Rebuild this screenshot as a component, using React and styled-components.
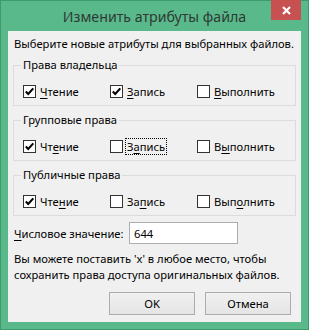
import React from "react";
import styled, { createGlobalStyle } from "styled-components";

const GlobalStyle = createGlobalStyle`
  html, body { margin: 0; padding: 0; }
  body {
    width: 309px;
    height: 330px;
    overflow: hidden;
    font-family: "Noto Sans", "Open Sans", sans-serif;
    font-size: 11.2px;
    color: #000;
  }
`;

const Window = styled.div`
  box-sizing: border-box;
  width: 309px;
  height: 330px;
  background: #5ab98b;
  border: 1px solid #3f9b6e;
  padding: 0 7px 7px;
  display: flex;
  flex-direction: column;
`;

const TitleBar = styled.div`
  height: 30px;
  display: grid;
  grid-template-columns: 1fr auto 1fr;
  align-items: start;
`;

const Title = styled.div`
  grid-column: 2;
  font-size: 14.2px;
  line-height: 31px;
  color: #2f3a34;
  white-space: nowrap;
`;

const CloseButton = styled.div`
  grid-column: 3;
  justify-self: end;
  width: 30px;
  height: 20px;
  margin-top: -1px;
  background: #c75050;
  display: flex;
  align-items: center;
  justify-content: center;
`;

const Panel = styled.div`
  flex: 1;
  background: #f0f0f0;
  padding: 5px 5px 7px;
  display: flex;
  flex-direction: column;
`;

const Intro = styled.div`
  padding-left: 1px;
  line-height: 15px;
  white-space: nowrap;
`;

const Group = styled.fieldset`
  margin: 7px 0 0;
  padding: 12px 8px 6px 9px;
  border: 1px solid #dcdcdc;
  min-inline-size: 0;
`;

const Legend = styled.legend`
  margin-left: -2px;
  padding: 0 2px;
  line-height: 14px;
`;

const CheckRow = styled.div`
  display: grid;
  grid-template-columns: 87px 87px auto;
  line-height: 15px;
`;

const CheckItem = styled.label`
  display: inline-flex;
  align-items: center;
  gap: 4px;
  height: 15px;
  white-space: nowrap;
`;

const Box = styled.span`
  box-sizing: border-box;
  width: 13px;
  height: 13px;
  border: 1px solid #333;
  background: #fff;
  display: flex;
  align-items: center;
  justify-content: center;
  flex: none;
`;

const LabelText = styled.span`
  outline: ${(p) => (p.$focused ? "1px dotted #000" : "none")};
  outline-offset: 0;
  padding: 0 ${(p) => (p.$focused ? "1px" : "0")};
  margin: 0 ${(p) => (p.$focused ? "-1px" : "0")};
`;

const Key = styled.u`
  text-decoration-thickness: 1px;
  text-underline-offset: 2px;
`;

const ValueRow = styled.div`
  margin-top: 6px;
  padding-left: 1px;
  display: flex;
  align-items: center;
  height: 22px;
`;

const ValueLabel = styled.label`
  width: 115px;
  white-space: nowrap;
`;

const ValueInput = styled.input`
  box-sizing: border-box;
  width: 109px;
  height: 22px;
  border: 1px solid #abadb3;
  background: #fff;
  padding: 0 4px;
  font-family: inherit;
  font-size: 11.2px;
  color: #000;
  outline: none;
`;

const Note = styled.div`
  margin-top: 7px;
  padding-left: 1px;
  line-height: 16px;
  white-space: nowrap;
`;

const Buttons = styled.div`
  margin-top: 9px;
  padding-right: 5px;
  display: flex;
  justify-content: flex-end;
  gap: 10px;
`;

const Button = styled.button`
  box-sizing: border-box;
  width: 86px;
  height: 23px;
  border: 1px solid #acacac;
  background: linear-gradient(#f0f0f0, #e5e5e5);
  font-family: inherit;
  font-size: 11.2px;
  color: #000;
  padding: 0;
`;

function Check({ checked, children, focused }) {
  return (
    <CheckItem>
      <Box>
        {checked && (
          <svg width="11" height="11" viewBox="0 0 11 11">
            <path d="M1.8 5.6 L4.2 8 L9.3 2.4" fill="none" stroke="#000" strokeWidth="2.1" />
          </svg>
        )}
      </Box>
      <LabelText $focused={focused}>{children}</LabelText>
    </CheckItem>
  );
}

function Under({ text, at }) {
  return (
    <>
      {text.slice(0, at)}
      <Key>{text[at]}</Key>
      {text.slice(at + 1)}
    </>
  );
}

const groups = [
  { title: "Права владельца", checks: [true, true, false], keys: [0, 0, 0] },
  { title: "Групповые права", checks: [true, false, false], keys: [2, 1, 1], focus: 1 },
  { title: "Публичные права", checks: [true, false, false], keys: [3, 2, 3] },
];

const labels = ["Чтение", "Запись", "Выполнить"];

export default function App() {
  return (
    <>
      <GlobalStyle />
      <Window>
        <TitleBar>
          <Title>Изменить атрибуты файла</Title>
          <CloseButton>
            <svg width="9" height="9" viewBox="0 0 9 9">
              <path d="M1 1 L8 8 M8 1 L1 8" stroke="#fff" strokeWidth="2.2" />
            </svg>
          </CloseButton>
        </TitleBar>
        <Panel>
          <Intro>Выберите новые атрибуты для выбранных файлов.</Intro>
          {groups.map((g) => (
            <Group key={g.title}>
              <Legend>{g.title}</Legend>
              <CheckRow>
                {labels.map((l, i) => (
                  <Check key={l} checked={g.checks[i]} focused={g.focus === i}>
                    <Under text={l} at={g.keys[i]} />
                  </Check>
                ))}
              </CheckRow>
            </Group>
          ))}
          <ValueRow>
            <ValueLabel>
              <Under text="Числовое значение:" at={0} />
            </ValueLabel>
            <ValueInput defaultValue="644" />
          </ValueRow>
          <Note>
            Вы можете поставить 'x' в любое место, чтобы
            <br />
            сохранить права доступа оригинальных файлов.
          </Note>
          <Buttons>
            <Button>OK</Button>
            <Button>Отмена</Button>
          </Buttons>
        </Panel>
      </Window>
    </>
  );
}
